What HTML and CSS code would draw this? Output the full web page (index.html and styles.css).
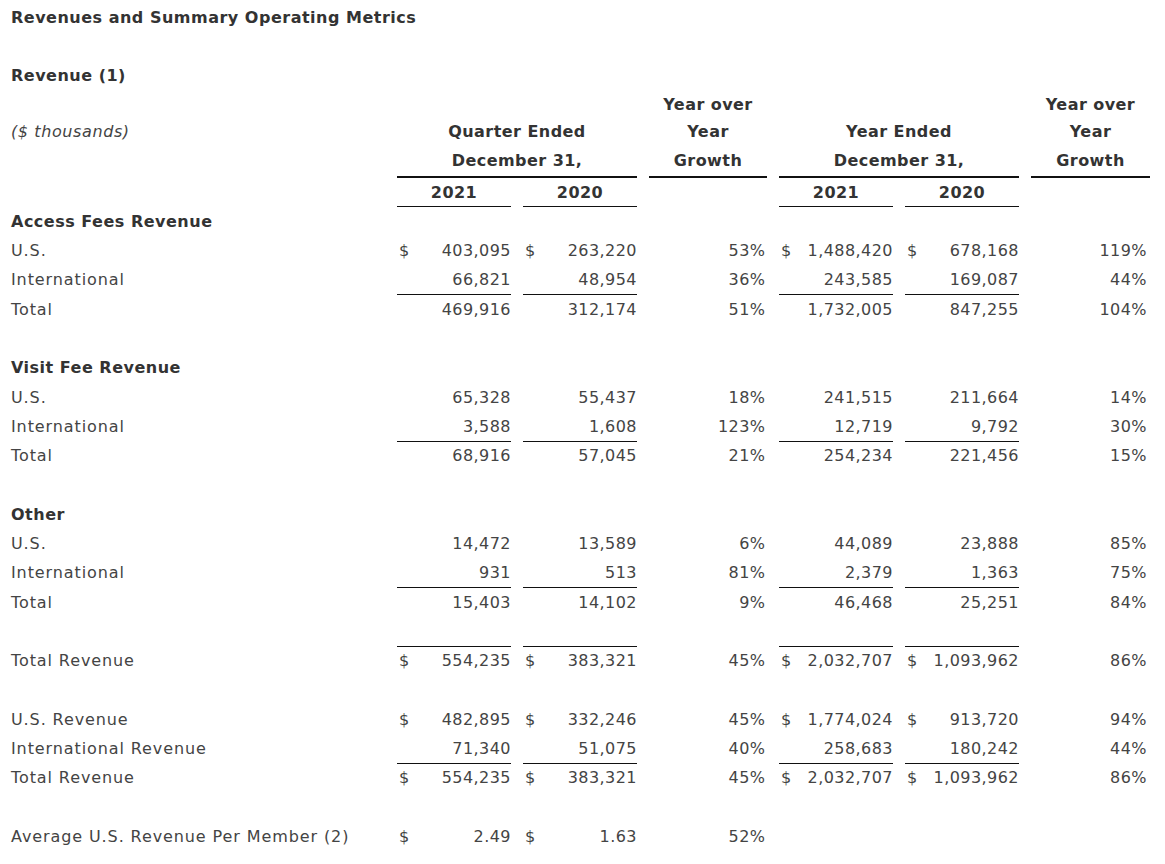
FILE: index.html
```html
<!DOCTYPE html>
<html lang="en">
<head>
<meta charset="utf-8">
<title>Revenues and Summary Operating Metrics</title>
<link rel="stylesheet" href="styles.css">
</head>
<body>
<div class="page">
  <div class="title">Revenues and Summary Operating Metrics</div>
  <div class="subtitle">Revenue (1)</div>
  <table class="fin">
    <colgroup>
      <col class="c-label">
      <col class="c-num">
      <col class="c-num">
      <col class="c-pct">
      <col class="c-num">
      <col class="c-num">
      <col class="c-pct2">
    </colgroup>
    <thead>
      <tr class="h1">
        <th></th>
        <th colspan="2"></th>
        <th class="hd">Year over</th>
        <th colspan="2"></th>
        <th class="hd">Year over</th>
      </tr>
      <tr class="h2">
        <th class="units">($ thousands)</th>
        <th colspan="2" class="hd">Quarter Ended</th>
        <th class="hd">Year</th>
        <th colspan="2" class="hd">Year Ended</th>
        <th class="hd">Year</th>
      </tr>
      <tr class="h3">
        <th></th>
        <th colspan="2" class="hd rule2">December 31,</th>
        <th class="hd rule2">Growth</th>
        <th colspan="2" class="hd rule2">December 31,</th>
        <th class="hd rule2">Growth</th>
      </tr>
      <tr class="h4">
        <th></th>
        <th class="hd rule">2021</th>
        <th class="hd rule">2020</th>
        <th></th>
        <th class="hd rule">2021</th>
        <th class="hd rule">2020</th>
        <th></th>
      </tr>
    </thead>
    <tbody>
      <tr><td class="sec" colspan="7">Access Fees Revenue</td></tr>
      <tr><td>U.S.</td><td class="n"><span class="cur">$</span>403,095</td><td class="n"><span class="cur">$</span>263,220</td><td class="p">53%</td><td class="n"><span class="cur">$</span>1,488,420</td><td class="n"><span class="cur">$</span>678,168</td><td class="p p2">119%</td></tr>
      <tr><td>International</td><td class="n rule">66,821</td><td class="n rule">48,954</td><td class="p">36%</td><td class="n rule">243,585</td><td class="n rule">169,087</td><td class="p p2">44%</td></tr>
      <tr><td>Total</td><td class="n">469,916</td><td class="n">312,174</td><td class="p">51%</td><td class="n">1,732,005</td><td class="n">847,255</td><td class="p p2">104%</td></tr>
      <tr><td colspan="7"></td></tr>

      <tr><td class="sec" colspan="7">Visit Fee Revenue</td></tr>
      <tr><td>U.S.</td><td class="n">65,328</td><td class="n">55,437</td><td class="p">18%</td><td class="n">241,515</td><td class="n">211,664</td><td class="p p2">14%</td></tr>
      <tr><td>International</td><td class="n rule">3,588</td><td class="n rule">1,608</td><td class="p">123%</td><td class="n rule">12,719</td><td class="n rule">9,792</td><td class="p p2">30%</td></tr>
      <tr><td>Total</td><td class="n">68,916</td><td class="n">57,045</td><td class="p">21%</td><td class="n">254,234</td><td class="n">221,456</td><td class="p p2">15%</td></tr>
      <tr><td colspan="7"></td></tr>

      <tr><td class="sec" colspan="7">Other</td></tr>
      <tr><td>U.S.</td><td class="n">14,472</td><td class="n">13,589</td><td class="p">6%</td><td class="n">44,089</td><td class="n">23,888</td><td class="p p2">85%</td></tr>
      <tr><td>International</td><td class="n rule">931</td><td class="n rule">513</td><td class="p">81%</td><td class="n rule">2,379</td><td class="n rule">1,363</td><td class="p p2">75%</td></tr>
      <tr><td>Total</td><td class="n">15,403</td><td class="n">14,102</td><td class="p">9%</td><td class="n">46,468</td><td class="n">25,251</td><td class="p p2">84%</td></tr>
      <tr><td></td><td class="rule"></td><td class="rule"></td><td></td><td class="rule"></td><td class="rule"></td><td></td></tr>

      <tr><td>Total Revenue</td><td class="n"><span class="cur">$</span>554,235</td><td class="n"><span class="cur">$</span>383,321</td><td class="p">45%</td><td class="n"><span class="cur">$</span>2,032,707</td><td class="n"><span class="cur">$</span>1,093,962</td><td class="p p2">86%</td></tr>
      <tr><td colspan="7"></td></tr>

      <tr><td>U.S. Revenue</td><td class="n"><span class="cur">$</span>482,895</td><td class="n"><span class="cur">$</span>332,246</td><td class="p">45%</td><td class="n"><span class="cur">$</span>1,774,024</td><td class="n"><span class="cur">$</span>913,720</td><td class="p p2">94%</td></tr>
      <tr><td>International Revenue</td><td class="n rule">71,340</td><td class="n rule">51,075</td><td class="p">40%</td><td class="n rule">258,683</td><td class="n rule">180,242</td><td class="p p2">44%</td></tr>
      <tr><td>Total Revenue</td><td class="n"><span class="cur">$</span>554,235</td><td class="n"><span class="cur">$</span>383,321</td><td class="p">45%</td><td class="n"><span class="cur">$</span>2,032,707</td><td class="n"><span class="cur">$</span>1,093,962</td><td class="p p2">86%</td></tr>
      <tr><td colspan="7"></td></tr>

      <tr><td>Average U.S. Revenue Per Member (2)</td><td class="n"><span class="cur">$</span>2.49</td><td class="n"><span class="cur">$</span>1.63</td><td class="p">52%</td><td></td><td></td><td></td></tr>
    </tbody>
  </table>
</div>
</body>
</html>
```

FILE: styles.css
```css
html, body {
  margin: 0;
  padding: 0;
  background: #ffffff;
}

.page {
  padding: 3px 0 0 0;
  font-family: "DejaVu Sans", "Noto Sans", sans-serif;
  font-size: 16px;
  color: #444444;
}

.title,
.subtitle {
  padding-left: 11px;
  height: 29px;
  line-height: 29px;
  font-weight: bold;
  color: #333333;
  letter-spacing: 0.5px;
}

.subtitle {
  margin-top: 29px;
}

.fin {
  border-collapse: separate;
  border-spacing: 12px 0;
  margin-left: -1px;
  table-layout: fixed;
  width: 1162px;
}

.c-label { width: 374px; }
.c-num { width: 114px; }
.c-pct { width: 118px; }
.c-pct2 { width: 119px; }

.fin tr {
  height: 29.3px;
}

.fin tr.h2 {
  height: 25.3px;
}

.fin tr.h3 {
  height: 33.3px;
}

.fin th,
.fin td {
  padding: 0;
  line-height: 20px;
  vertical-align: middle;
  white-space: nowrap;
  letter-spacing: 0.9px;
}

.fin th {
  font-weight: bold;
  color: #333333;
  letter-spacing: 0.45px;
}

.fin .hd {
  text-align: center;
}

.fin .units {
  text-align: left;
  font-weight: normal;
  font-style: italic;
  color: #444444;
  letter-spacing: 0.6px;
}

.fin .sec {
  font-weight: bold;
  color: #333333;
  letter-spacing: 0.5px;
}

.fin .n {
  text-align: right;
  padding-right: 0;
  letter-spacing: 0.45px;
}

.fin .p {
  text-align: right;
  padding-right: 1.5px;
  letter-spacing: 0.45px;
}

.fin .p2 {
  padding-right: 3px;
}

.cur {
  float: left;
  padding-left: 2px;
  letter-spacing: 0;
}

.rule {
  box-shadow: inset 0 -1px 0 #111111;
}

.rule2 {
  box-shadow: inset 0 -2px 0 #111111;
}
```
